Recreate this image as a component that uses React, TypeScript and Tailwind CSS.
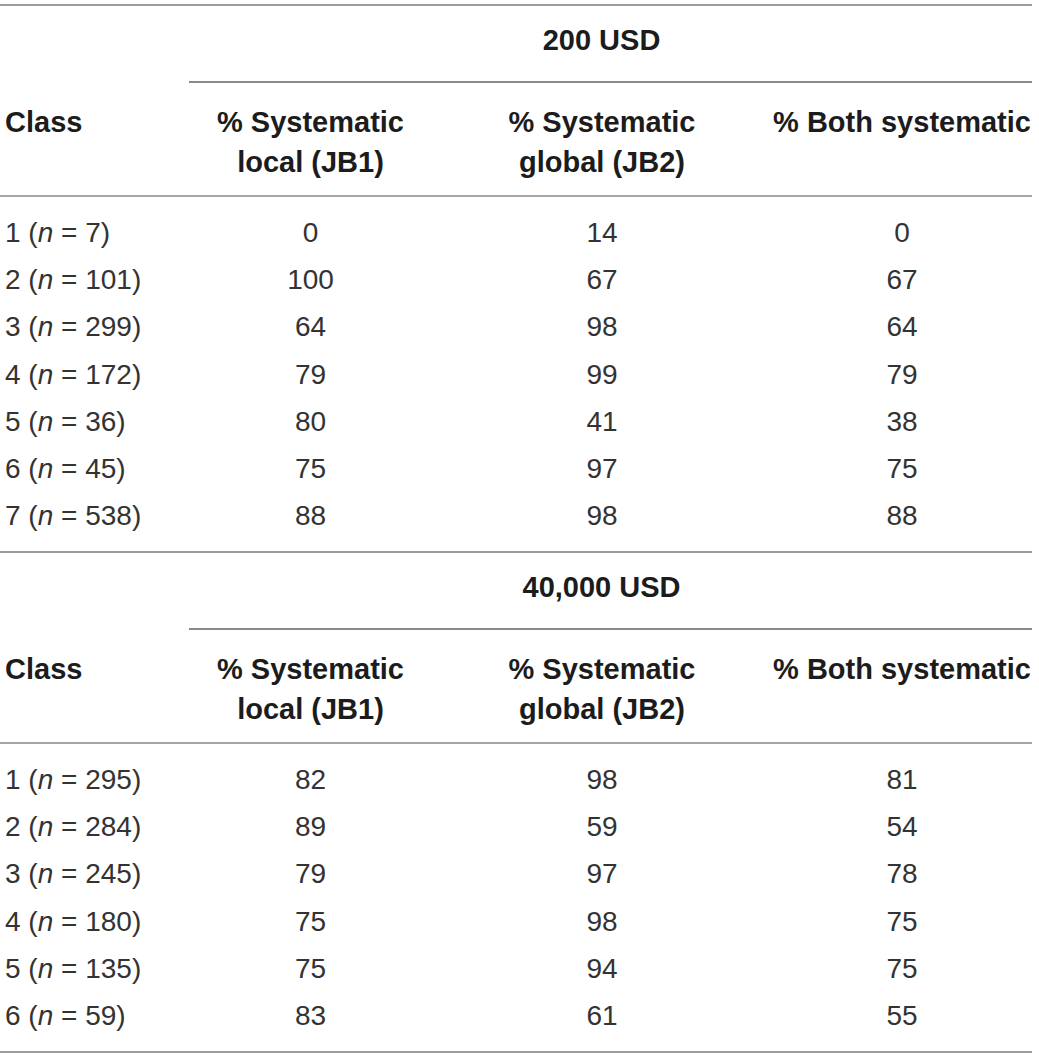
import React, { FC } from 'react'

type Row = { cls: string; n: string; local: string; global: string; both: string }

const sections: { title: string; rows: Row[] }[] = [
  {
    title: '200 USD',
    rows: [
      { cls: '1', n: '7', local: '0', global: '14', both: '0' },
      { cls: '2', n: '101', local: '100', global: '67', both: '67' },
      { cls: '3', n: '299', local: '64', global: '98', both: '64' },
      { cls: '4', n: '172', local: '79', global: '99', both: '79' },
      { cls: '5', n: '36', local: '80', global: '41', both: '38' },
      { cls: '6', n: '45', local: '75', global: '97', both: '75' },
      { cls: '7', n: '538', local: '88', global: '98', both: '88' },
    ],
  },
  {
    title: '40,000 USD',
    rows: [
      { cls: '1', n: '295', local: '82', global: '98', both: '81' },
      { cls: '2', n: '284', local: '89', global: '59', both: '54' },
      { cls: '3', n: '245', local: '79', global: '97', both: '78' },
      { cls: '4', n: '180', local: '75', global: '98', both: '75' },
      { cls: '5', n: '135', local: '75', global: '94', both: '75' },
      { cls: '6', n: '59', local: '83', global: '61', both: '55' },
    ],
  },
]

const cols = 'grid grid-cols-[189px_243px_340px_260px]'

const Section: FC<{ title: string; rows: Row[] }> = ({ title, rows }) => (
  <div className="border-b-2 border-[#9c9c9c]">
    {/* group title */}
    <div className={cols}>
      <div />
      <div className="col-span-3 flex h-[77px] items-center justify-center border-b-2 border-[#8a8a8a] pr-[18px] pb-[5px] text-[29px] font-bold text-[#1c1c1c]">
        {title}
      </div>
    </div>
    {/* column headers */}
    <div className={`${cols} h-[114px] items-start border-b-2 border-[#a5a5a5] pt-[19px] text-[29px] font-bold leading-[40px] text-[#1c1c1c]`}>
      <div className="pl-[5px]">Class</div>
      <div className="text-center">
        % Systematic
        <br />
        local (JB1)
      </div>
      <div className="text-center">
        % Systematic
        <br />
        global (JB2)
      </div>
      <div className="text-center">% Both systematic</div>
    </div>
    {/* body */}
    <div className="pt-[12px] pb-[11px] text-[28px] text-[#333333]">
      {rows.map((r) => (
        <div key={r.cls} className={`${cols} h-[47.3px] items-center`}>
          <div className="pl-[5px]">
            {r.cls} (<i>n</i> = {r.n})
          </div>
          <div className="text-center">{r.local}</div>
          <div className="text-center">{r.global}</div>
          <div className="text-center">{r.both}</div>
        </div>
      ))}
    </div>
  </div>
)

const App: FC = () => {
  return (
    <div className="h-[1059px] w-[1039px] bg-white pt-[4px] font-['Liberation_Sans',Arial,sans-serif]">
      <div className="w-[1032px] border-t-2 border-[#9c9c9c]">
        {sections.map((s) => (
          <Section key={s.title} title={s.title} rows={s.rows} />
        ))}
      </div>
    </div>
  )
}

export default App
